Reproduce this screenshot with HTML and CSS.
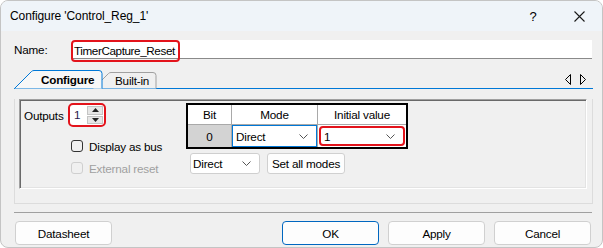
FILE: index.html
```html
<!DOCTYPE html>
<html lang="en">
<head>
    <meta charset="UTF-8">
    <title>Configure 'Control_Reg_1'</title>
    <link rel="stylesheet" href="styles.css">
</head>
<body>
<div class="window">
    <div class="titlebar">
        <div class="title">Configure 'Control_Reg_1'</div>
        <div class="tb-btn">?</div>
        <div class="tb-btn">
            <svg width="11" height="11" viewBox="0 0 11 11"><path d="M0.5 0.5 L10.5 10.5 M10.5 0.5 L0.5 10.5" stroke="#1a1a1a" stroke-width="1.1" fill="none"/></svg>
        </div>
    </div>

    <div class="name-row">
        <div class="name-label">Name:</div>
        <div class="name-input"><span class="hl">TimerCapture_Reset</span></div>
    </div>

    <div class="tabstrip">
        <div class="tab active">
            <svg class="tab-shape" width="89" height="19" viewBox="0 0 89 19"><path d="M0.5 18.5 L17.5 1.5 Q18.5 0.5 20 0.5 L85 0.5 Q88 0.5 88 3.5 L88 18.5" fill="#f7f7f7" stroke="#0078d7"/></svg>
            <span>Configure</span>
        </div>
        <div class="tab">
            <svg class="tab-shape" width="64" height="17" viewBox="0 0 64 17"><path d="M0.5 16.5 L15.5 1.5 Q16.5 0.5 18 0.5 L60 0.5 Q63 0.5 63 3.5 L63 16.5" fill="#f0f0f0" stroke="#a0a0a0"/></svg>
            <span>Built-in</span>
        </div>
        <div class="tab-arrows">
            <svg width="8" height="11" viewBox="0 0 8 11"><path d="M6.5 0.5 L6.5 10.5 L1.5 5.5 Z" fill="none" stroke="#000"/></svg>
            <svg width="8" height="11" viewBox="0 0 8 11"><path d="M1.5 0.5 L1.5 10.5 L6.5 5.5 Z" fill="none" stroke="#000"/></svg>
        </div>
    </div>

    <div class="tabpage">
        <div class="group">
            <div class="left-col">
                <div class="outputs-row">
                    <div class="outputs-label">Outputs</div>
                    <div class="spinner">
                        <div class="spin-value">1</div>
                        <div class="spin-btns">
                            <div class="spin-btn"><svg width="7" height="4" viewBox="0 0 7 4"><path d="M0 4 L3.5 0 L7 4 Z" fill="#222"/></svg></div>
                            <div class="spin-btn"><svg width="7" height="4" viewBox="0 0 7 4"><path d="M0 0 L3.5 4 L7 0 Z" fill="#222"/></svg></div>
                        </div>
                    </div>
                </div>
                <div class="check-row">
                    <span class="checkbox"></span>
                    <span>Display as bus</span>
                </div>
                <div class="check-row disabled">
                    <span class="checkbox"></span>
                    <span>External reset</span>
                </div>
            </div>

            <div class="right-col">
                <div class="bit-table">
                    <div class="cell head">Bit</div>
                    <div class="cell head">Mode</div>
                    <div class="cell head">Initial value</div>
                    <div class="cell bit">0</div>
                    <div class="cell">
                        <div class="combo combo-focus">
                            <span>Direct</span>
                            <svg width="9" height="5" viewBox="0 0 9 5"><path d="M0.5 0.5 L4.5 4.5 L8.5 0.5" fill="none" stroke="#555"/></svg>
                        </div>
                    </div>
                    <div class="cell">
                        <div class="combo combo-hl">
                            <span>1</span>
                            <svg width="9" height="5" viewBox="0 0 9 5"><path d="M0.5 0.5 L4.5 4.5 L8.5 0.5" fill="none" stroke="#555"/></svg>
                        </div>
                    </div>
                </div>
                <div class="mode-row">
                    <div class="combo combo-small">
                        <span>Direct</span>
                        <svg width="9" height="5" viewBox="0 0 9 5"><path d="M0.5 0.5 L4.5 4.5 L8.5 0.5" fill="none" stroke="#555"/></svg>
                    </div>
                    <button class="btn btn-small">Set all modes</button>
                </div>
            </div>
        </div>
    </div>

    <div class="separator"></div>

    <div class="button-row">
        <button class="btn">Datasheet</button>
        <div class="spacer"></div>
        <button class="btn btn-default">OK</button>
        <button class="btn">Apply</button>
        <button class="btn">Cancel</button>
    </div>
</div>
</body>
</html>
```

FILE: styles.css
```css
body {
    margin: 0;
    background: #fff;
    font-family: "Liberation Sans", Arial, sans-serif;
    font-size: 11.7px;
    letter-spacing: -0.2px;
    color: #000;
}
.window {
    width: 603px;
    height: 248px;
    box-sizing: border-box;
    border: 1px solid #c4c4c4;
    border-radius: 8px;
    background: #f0f0f0;
    overflow: hidden;
}

/* title bar */
.titlebar {
    height: 30px;
    display: flex;
    align-items: center;
    background: #eff4f9;
}
.title {
    flex: 1;
    padding-left: 9px;
    font-size: 12px;
    letter-spacing: -0.1px;
}
.tb-btn {
    width: 46px;
    height: 30px;
    display: flex;
    align-items: center;
    justify-content: center;
    font-size: 13px;
}

/* name */
.name-row {
    display: flex;
    align-items: center;
    padding: 9px 10px 0 13px;
}
.name-label {
    width: 57px;
}
.name-input {
    flex: 1;
    height: 18px;
    background: #fff;
    border-bottom: 1px solid #8a8a8a;
    display: flex;
    align-items: center;
}
.hl {
    height: 18px;
    line-height: 18px;
    border: 2px solid #e3131b;
    border-radius: 4px;
    padding: 0 3px 0 1px;
    margin: 0 0 -3px;
    letter-spacing: -0.4px;
}

/* tabs */
.tabstrip {
    display: flex;
    align-items: flex-end;
    height: 18px;
    margin: 11px 9px 0 13px;
    border-bottom: 1px solid #0078d7;
}
.tab {
    position: relative;
    height: 16px;
    width: 64px;
    margin-left: -10px;
    display: flex;
    align-items: center;
    padding-left: 22px;
    box-sizing: border-box;
}
.tab.active {
    height: 18px;
    width: 89px;
    margin-left: 0;
    padding-left: 27px;
    font-weight: bold;
    z-index: 2;
}
.tab-shape {
    position: absolute;
    left: 0;
    top: 0;
}
.tab span {
    position: relative;
}
.tab-arrows {
    margin-left: auto;
    display: flex;
    gap: 7px;
    align-self: center;
    padding-right: 6px;
}

/* tab page */
.tabpage {
    margin: 0 9px 0 13px;
    border: 1px solid #dcdcdc;
    border-top: none;
    height: 104px;
}
.group {
    margin: 10px 5px 0 4px;
    height: 90px;
    box-sizing: border-box;
    border-style: solid;
    border-width: 1px;
    border-color: #a0a0a0 #fff #fff #a0a0a0;
    box-shadow: inset 1px 1px 0 #696969, inset -1px -1px 0 #e3e3e3;
    display: flex;
    padding-top: 3px;
}
.left-col {
    width: 166px;
    padding-left: 4px;
    box-sizing: border-box;
}
.outputs-row {
    display: flex;
    align-items: center;
    height: 24px;
}
.outputs-label {
    width: 44px;
}
.spinner {
    width: 38px;
    height: 24px;
    box-sizing: border-box;
    border: 2px solid #e3131b;
    border-radius: 5px;
    background: #fff;
    display: flex;
    padding: 1px;
}
.spin-value {
    flex: 1;
    padding-left: 3px;
    line-height: 18px;
    color: #2b1a4a;
}
.spin-btns {
    width: 16px;
    display: flex;
    flex-direction: column;
    gap: 1px;
}
.spin-btn {
    flex: 1;
    background: #e6e6e6;
    border: 1px solid #c4c4c4;
    display: flex;
    align-items: center;
    justify-content: center;
}
.check-row {
    display: flex;
    align-items: center;
    gap: 6px;
    height: 20px;
    margin-left: 47px;
    margin-top: 2px;
}
.outputs-row + .check-row {
    margin-top: 9px;
}
.checkbox {
    width: 12px;
    height: 12px;
    box-sizing: border-box;
    border: 1px solid #333;
    border-radius: 3px;
}
.disabled {
    color: #a0a0a0;
}
.disabled .checkbox {
    border-color: #cfcfcf;
}

/* table */
.bit-table {
    display: grid;
    grid-template-columns: 43px 85px 88px;
    grid-template-rows: 19px 22px;
    gap: 1px;
    width: max-content;
    background: #a9a9a9;
    border: 2px solid #000;
}
.cell {
    background: #fff;
    display: flex;
    align-items: center;
    justify-content: center;
}
.cell.bit {
    background: #d3d3d3;
}
.combo {
    box-sizing: border-box;
    display: flex;
    align-items: center;
    justify-content: space-between;
    background: #fff;
    padding: 0 8px 0 3px;
}
.combo-focus {
    width: 100%;
    height: 100%;
    border: 1px solid #0078d7;
}
.combo-hl {
    width: 86px;
    height: 20px;
    border: 2px solid #e3131b;
    border-radius: 4px;
    padding-left: 3px;
}
.mode-row {
    display: flex;
    align-items: center;
    gap: 7px;
    margin: 4px 0 0 4px;
}
.combo-small {
    width: 70px;
    height: 21px;
    border: 1px solid #cfcfcf;
    border-radius: 3px;
    padding: 0 8px 0 2px;
}

/* bottom */
.separator {
    margin: 8px 10px 0 13px;
    border-top: 1px solid #a0a0a0;
}
.button-row {
    display: flex;
    gap: 9px;
    margin: 8px 11px 0 14px;
}
.spacer {
    flex: 1;
}
.btn {
    width: 97px;
    height: 24px;
    font-family: inherit;
    font-size: 11.7px;
    letter-spacing: -0.2px;
    color: #000;
    background: #fdfdfd;
    border: 1px solid #d0d0d0;
    border-radius: 4px;
    padding: 0;
}
.btn-default {
    border-color: #0067c0;
}
.btn-small {
    width: 78px;
    height: 21px;
    border-radius: 3px;
}
```
